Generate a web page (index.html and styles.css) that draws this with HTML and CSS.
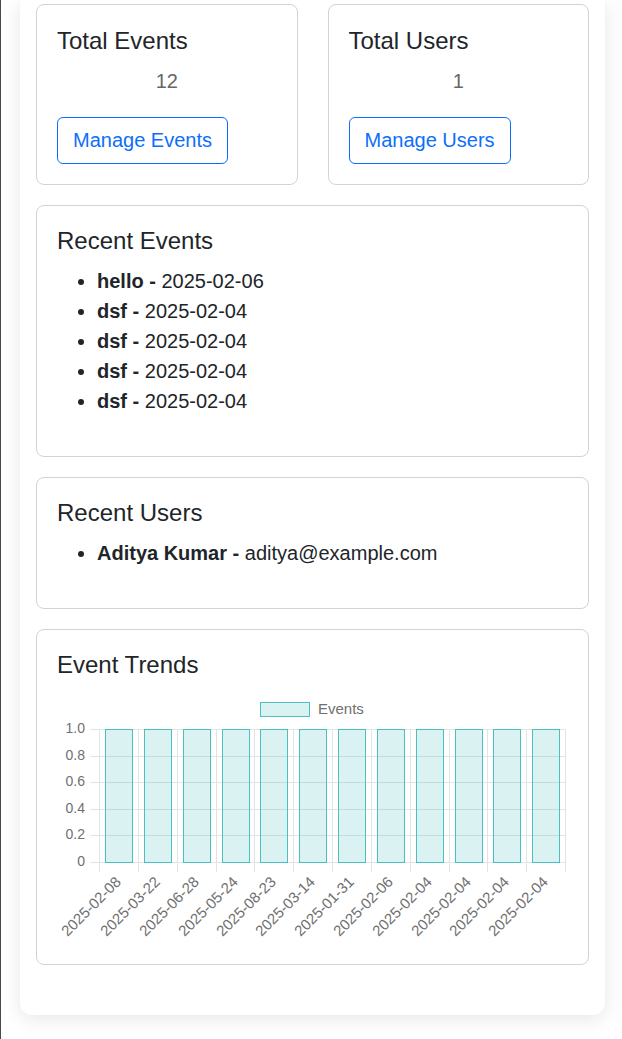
FILE: index.html
```html
<!DOCTYPE html>
<html lang="en">
<head>
<meta charset="utf-8">
<title>Admin Dashboard</title>
<link rel="stylesheet" href="styles.css">
</head>
<body>
<main class="dashboard">
  <section class="stats">
    <div class="card stat-card">
      <h3 class="card-title">Total Events</h3>
      <p class="stat-value">12</p>
      <a class="btn-outline" href="#">Manage Events</a>
    </div>
    <div class="card stat-card">
      <h3 class="card-title">Total Users</h3>
      <p class="stat-value">1</p>
      <a class="btn-outline" href="#">Manage Users</a>
    </div>
  </section>

  <section class="card">
    <h3 class="card-title">Recent Events</h3>
    <ul class="item-list">
      <li><strong>hello -</strong> 2025-02-06</li>
      <li><strong>dsf -</strong> 2025-02-04</li>
      <li><strong>dsf -</strong> 2025-02-04</li>
      <li><strong>dsf -</strong> 2025-02-04</li>
      <li><strong>dsf -</strong> 2025-02-04</li>
    </ul>
  </section>

  <section class="card">
    <h3 class="card-title">Recent Users</h3>
    <ul class="item-list">
      <li><strong>Aditya Kumar -</strong> aditya@example.com</li>
    </ul>
  </section>

  <section class="card">
    <h3 class="card-title">Event Trends</h3>
    <svg class="chart" width="510" height="254" viewBox="0 0 510 254">
      <!-- legend -->
      <rect class="legend-box" x="203.5" y="12.5" width="49" height="14"/>
      <text class="legend-text" x="261" y="20">Events</text>

      <!-- horizontal grid -->
      <g class="grid">
        <line x1="33" y1="39.5" x2="508.5" y2="39.5"/>
        <line x1="33" y1="66.5" x2="508.5" y2="66.5"/>
        <line x1="33" y1="92.5" x2="508.5" y2="92.5"/>
        <line x1="33" y1="119.5" x2="508.5" y2="119.5"/>
        <line x1="33" y1="145.5" x2="508.5" y2="145.5"/>
        <line x1="33" y1="172.5" x2="508.5" y2="172.5"/>
      </g>
      <!-- vertical grid -->
      <g class="grid">
        <line x1="42.5" y1="39.5" x2="42.5" y2="182"/>
        <line x1="81.5" y1="39.5" x2="81.5" y2="182"/>
        <line x1="120.5" y1="39.5" x2="120.5" y2="182"/>
        <line x1="159.5" y1="39.5" x2="159.5" y2="182"/>
        <line x1="197.5" y1="39.5" x2="197.5" y2="182"/>
        <line x1="236.5" y1="39.5" x2="236.5" y2="182"/>
        <line x1="275.5" y1="39.5" x2="275.5" y2="182"/>
        <line x1="314.5" y1="39.5" x2="314.5" y2="182"/>
        <line x1="353.5" y1="39.5" x2="353.5" y2="182"/>
        <line x1="392.5" y1="39.5" x2="392.5" y2="182"/>
        <line x1="430.5" y1="39.5" x2="430.5" y2="182"/>
        <line x1="469.5" y1="39.5" x2="469.5" y2="182"/>
        <line x1="508.5" y1="39.5" x2="508.5" y2="182"/>
      </g>

      <!-- y labels -->
      <g class="tick-text y-ticks">
        <text x="28" y="39.5">1.0</text>
        <text x="28" y="66">0.8</text>
        <text x="28" y="92.5">0.6</text>
        <text x="28" y="119">0.4</text>
        <text x="28" y="145.5">0.2</text>
        <text x="28" y="172">0</text>
      </g>

      <!-- bars -->
      <g class="bars">
        <rect x="48.5" y="39.5" width="27" height="133"/>
        <rect x="87.5" y="39.5" width="27" height="133"/>
        <rect x="126.5" y="39.5" width="27" height="133"/>
        <rect x="165.5" y="39.5" width="27" height="133"/>
        <rect x="203.5" y="39.5" width="27" height="133"/>
        <rect x="242.5" y="39.5" width="27" height="133"/>
        <rect x="281.5" y="39.5" width="27" height="133"/>
        <rect x="320.5" y="39.5" width="27" height="133"/>
        <rect x="359.5" y="39.5" width="27" height="133"/>
        <rect x="398.5" y="39.5" width="27" height="133"/>
        <rect x="436.5" y="39.5" width="27" height="133"/>
        <rect x="475.5" y="39.5" width="27" height="133"/>
      </g>

      <!-- x labels -->
      <g class="tick-text x-ticks">
        <text transform="translate(62 190) rotate(-45)">2025-02-08</text>
        <text transform="translate(101 190) rotate(-45)">2025-03-22</text>
        <text transform="translate(140 190) rotate(-45)">2025-06-28</text>
        <text transform="translate(179 190) rotate(-45)">2025-05-24</text>
        <text transform="translate(217 190) rotate(-45)">2025-08-23</text>
        <text transform="translate(256 190) rotate(-45)">2025-03-14</text>
        <text transform="translate(295 190) rotate(-45)">2025-01-31</text>
        <text transform="translate(334 190) rotate(-45)">2025-02-06</text>
        <text transform="translate(373 190) rotate(-45)">2025-02-04</text>
        <text transform="translate(412 190) rotate(-45)">2025-02-04</text>
        <text transform="translate(450 190) rotate(-45)">2025-02-04</text>
        <text transform="translate(489 190) rotate(-45)">2025-02-04</text>
      </g>
    </svg>
  </section>
</main>
</body>
</html>
```

FILE: styles.css
```css
* {
  box-sizing: border-box;
}

html, body {
  margin: 0;
  padding: 0;
  background: #ffffff;
}

body {
  font-family: "Liberation Sans", Arial, sans-serif;
  color: #212529;
  min-height: 1039px;
  border-left: 1px solid #4a4a4a;
  padding: 0 17px 0 19px;
}

.dashboard {
  background: #ffffff;
  border-radius: 0 0 12px 12px;
  box-shadow: 0 4px 20px rgba(0, 0, 0, 0.1);
  padding: 4px 16px 30px;
}

.card {
  border: 1px solid #d3d3d3;
  border-radius: 8px;
  padding: 20px;
  margin-bottom: 20px;
  background: #fff;
}

.stats {
  display: grid;
  grid-template-columns: 1fr 1fr;
  gap: 30px;
}

.stat-card {
  display: flex;
  flex-direction: column;
  align-items: flex-start;
}

.card-title {
  margin: 0 0 11px;
  font-size: 24px;
  font-weight: 400;
  line-height: 29px;
  color: #212529;
}

.stat-card .card-title {
  margin-top: 1px;
  margin-bottom: 10px;
}

.stat-value {
  align-self: stretch;
  text-align: center;
  margin: 1px 0 21px;
  font-size: 20px;
  line-height: 30px;
  color: #666666;
}

.btn-outline {
  display: inline-block;
  font-size: 20px;
  line-height: 25px;
  padding: 10px 15px;
  color: #0d6efd;
  border: 1px solid #0d6efd;
  border-radius: 6px;
  text-decoration: none;
  background: #fff;
}

.item-list {
  margin: 0 0 20px;
  padding-left: 40px;
  font-size: 20px;
  line-height: 30px;
}

.item-list strong {
  font-weight: 700;
}

.chart {
  display: block;
  font-family: "Liberation Sans", Arial, sans-serif;
}

.grid line {
  stroke: #e3e3e3;
  stroke-width: 1;
}

.bars rect {
  fill: rgba(75, 192, 192, 0.2);
  stroke: rgb(75, 192, 192);
  stroke-width: 1;
}

.legend-box {
  fill: rgba(75, 192, 192, 0.2);
  stroke: rgb(75, 192, 192);
  stroke-width: 1;
}

.legend-text {
  font-size: 15px;
  fill: #707070;
  dominant-baseline: middle;
}

.tick-text text {
  font-size: 15px;
  fill: #707070;
}

.y-ticks text {
  font-size: 14px;
  text-anchor: end;
  dominant-baseline: middle;
}

.x-ticks text {
  text-anchor: end;
  dominant-baseline: middle;
}
```
